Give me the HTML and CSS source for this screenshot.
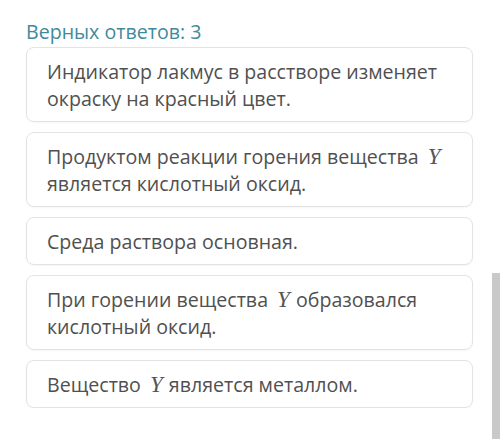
FILE: index.html
```html
<!DOCTYPE html>
<html lang="ru">
<head>
  <meta charset="UTF-8">
  <title>Верных ответов</title>
  <link rel="stylesheet" href="styles.css">
</head>
<body>
<div class=quiz>
  <h3 class=count>Верных ответов: 3</h3>
  <div class=answers>
    <div class=answer>Индикатор лакмус в расстворе изменяет окраску на красный цвет.</div>
    <div class=answer>Продуктом реакции горения вещества <i class=var>Y</i> является кислотный оксид.</div>
    <div class=answer>Среда раствора основная.</div>
    <div class=answer>При горении вещества <i class=var>Y</i> образовался кислотный оксид.</div>
    <div class=answer>Вещество <i class=var>Y</i> является металлом.</div>
  </div>
</div>
<div class=scroll></div>
</body>
</html>
```

FILE: styles.css
```css
body {
  margin: 0;
  background: #fff;
  font: 19.6px "Open Sans", "Liberation Sans", sans-serif;
  color: #505050;
}
.quiz { padding: 19px 27px 0 26px; }
.count {
  margin: 0 0 3px;
  font-weight: normal;
  font-size: 19.6px;
  line-height: 25px;
  color: #3f8b9b;
}
.answers {
  display: flex;
  flex-direction: column;
  gap: 10px;
}
.answer {
  border: 1px solid #e3e3e3;
  border-radius: 8px;
  padding: 10px 20px 9px;
  line-height: 27px;
  box-shadow: 0 1px 2px rgba(0,0,0,0.04);
}
.var {
  font: italic 23px "Liberation Serif", serif;
  line-height: 1;
  margin-left: 4px;
  padding-right: 1px;
  color: #555;
}
.scroll {
  position: fixed;
  right: 0;
  top: 273px;
  bottom: 0;
  width: 8px;
  background: #c9c9c9;
}
```
